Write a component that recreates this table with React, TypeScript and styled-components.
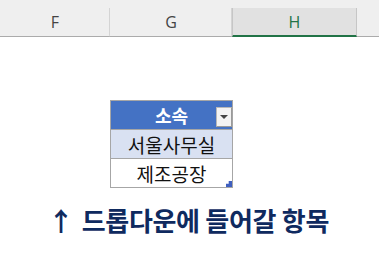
import React from 'react';
import styled, { createGlobalStyle } from 'styled-components';

const GlobalStyle = createGlobalStyle`
  html, body {
    margin: 0;
    padding: 0;
    background: #ffffff;
  }
  body {
    font-family: "Noto Sans CJK KR", "Noto Sans", sans-serif;
  }
`;

const Sheet = styled.div`
  width: 379px;
  height: 266px;
  overflow: hidden;
  background: #ffffff;
`;

const ColumnBar = styled.div`
  display: flex;
  height: 28px;
  padding-top: 8px;
  background: #efefef;
  border-bottom: 1px solid #ababab;
`;

const ColumnHead = styled.div<{ $width: number; $selected?: boolean }>`
  position: relative;
  box-sizing: border-box;
  width: ${(p) => p.$width}px;
  display: flex;
  align-items: center;
  justify-content: center;
  font-family: "Open Sans", "Liberation Sans", sans-serif;
  font-size: 16px;
  color: ${(p) => (p.$selected ? '#217346' : '#444444')};
  background: ${(p) => (p.$selected ? '#e1e1e1' : 'transparent')};
  border-left: 1px solid ${(p) => (p.$selected ? '#c6c6c6' : 'transparent')};
  border-right: 1px solid ${(p) => (p.$selected ? '#c6c6c6' : '#d4d4d4')};
  border-bottom: 2px solid ${(p) => (p.$selected ? '#217346' : 'transparent')};
  margin-bottom: -1px;
  padding-top: 1px;
`;

const Body = styled.div`
  display: flex;
  flex-direction: column;
  padding-top: 63px;
`;

const Table = styled.div`
  margin-left: 110px;
  width: 123px;
  box-sizing: border-box;
  border: 1px solid #a6a6a6;
  border-bottom: none;
`;

const Row = styled.div<{ $kind: 'head' | 'band' | 'plain' }>`
  position: relative;
  height: 28px;
  display: flex;
  align-items: center;
  justify-content: center;
  border-bottom: 1px solid #a6a6a6;
  font-size: ${(p) => (p.$kind === 'head' ? 18 : 19)}px;
  font-weight: ${(p) => (p.$kind === 'head' ? 700 : 400)};
  color: ${(p) => (p.$kind === 'head' ? '#ffffff' : '#111111')};
  background: ${(p) =>
    p.$kind === 'head' ? '#4472c4' : p.$kind === 'band' ? '#d9e1f2' : '#ffffff'};
`;

const DropButton = styled.div`
  position: absolute;
  right: 0;
  top: 6px;
  width: 16px;
  height: 20px;
  box-sizing: border-box;
  background: #f3f3f3;
  border: 1px solid #b8b8b8;
  border-right-color: #9a9a9a;
  border-bottom-color: #9a9a9a;
  display: flex;
  align-items: center;
  justify-content: center;

  &::after {
    content: '';
    width: 0;
    height: 0;
    border-left: 4px solid transparent;
    border-right: 4px solid transparent;
    border-top: 4px solid #444444;
  }
`;

const ResizeHandle = styled.div`
  position: absolute;
  right: 0;
  bottom: 0;
  width: 6px;
  height: 6px;
  background: #3f5fbf;
  clip-path: polygon(100% 0, 100% 100%, 0 100%, 0 45%, 45% 45%, 45% 0);
`;

const Caption = styled.div`
  margin-top: 15px;
  text-align: center;
  padding-right: 2px;
  font-size: 26px;
  font-weight: 700;
  color: #0f2a5f;
  line-height: 34px;
  letter-spacing: -0.3px;
`;

const Arrow = styled.span`
  margin-right: 8px;
`;

const columns = [
  { name: 'F', width: 110 },
  { name: 'G', width: 122 },
  { name: 'H', width: 125, selected: true },
];

export default function App() {
  return (
    <Sheet>
      <GlobalStyle />
      <ColumnBar>
        {columns.map((c) => (
          <ColumnHead key={c.name} $width={c.width} $selected={c.selected}>
            {c.name}
          </ColumnHead>
        ))}
      </ColumnBar>
      <Body>
        <Table>
          <Row $kind="head">
            소속
            <DropButton />
          </Row>
          <Row $kind="band">서울사무실</Row>
          <Row $kind="plain">
            제조공장
            <ResizeHandle />
          </Row>
        </Table>
        <Caption>
          <Arrow>↑</Arrow>드롭다운에 들어갈 항목
        </Caption>
      </Body>
    </Sheet>
  );
}
